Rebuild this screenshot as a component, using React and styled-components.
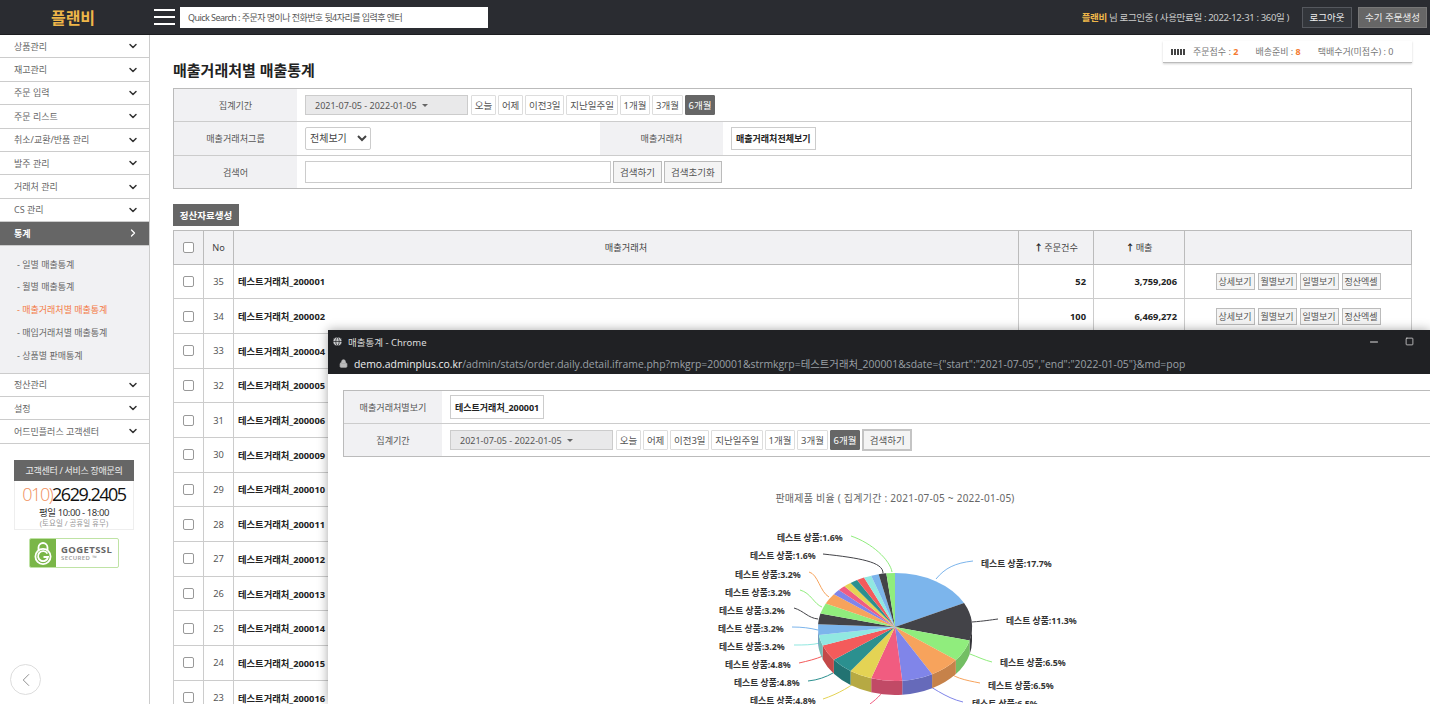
import React from 'react';
import styled, { createGlobalStyle } from 'styled-components';
import { ChevronDown, ChevronRight, ChevronLeft, Lock, Globe, Minus, Square } from 'lucide-react';

const FONT = '"Noto Sans", "Noto Sans CJK KR", sans-serif';

const GlobalStyle = createGlobalStyle`
  html, body {
    margin: 0;
    padding: 0;
    height: 100%;
    overflow: hidden;
    background: #fff;
  }
  body {
    font-family: ${FONT};
    font-size: 9.5px;
    color: #444;
  }
  * { box-sizing: border-box; }
`;

const menuTop = ['상품관리', '재고관리', '주문 입력', '주문 리스트', '취소/교환/반품 관리', '발주 관리', '거래처 관리', 'CS 관리'];
const menuSub = ['- 일별 매출통계', '- 월별 매출통계', '- 매출거래처별 매출통계', '- 매입거래처별 매출통계', '- 상품별 판매통계'];
const menuBottom = ['정산관리', '설정', '어드민플러스 고객센터'];
const rangeButtons = ['오늘', '어제', '이전3일', '지난일주일', '1개월', '3개월', '6개월'];
const rowActions = ['상세보기', '월별보기', '일별보기', '정산엑셀'];

const rows = [
  [35, '200001', '52', '3,759,206'],
  [34, '200002', '100', '6,469,272'],
  [33, '200004', '41', '2,918,400'],
  [32, '200005', '38', '2,640,150'],
  [31, '200006', '27', '1,987,300'],
  [30, '200009', '25', '1,702,880'],
  [29, '200010', '22', '1,530,600'],
  [28, '200011', '19', '1,244,900'],
  [27, '200012', '17', '1,102,350'],
  [26, '200013', '14', '968,200'],
  [25, '200014', '12', '804,700'],
  [24, '200015', '9', '615,400'],
  [23, '200016', '7', '482,100'],
];

const slices = [
  [17.7, '#7cb5ec'], [11.3, '#434348'], [6.5, '#90ed7d'], [6.5, '#f7a35c'], [6.5, '#8085e9'],
  [6.5, '#f15c80'], [4.8, '#e4d354'], [4.8, '#2b908f'], [4.8, '#f45b5b'], [3.2, '#91e8e1'],
  [3.2, '#7cb5ec'], [3.2, '#434348'], [3.2, '#90ed7d'], [3.2, '#f7a35c'], [1.6, '#8085e9'],
  [1.6, '#f15c80'], [1.6, '#e4d354'], [1.6, '#2b908f'], [1.6, '#f45b5b'], [1.6, '#91e8e1'],
  [1.6, '#7cb5ec'], [1.6, '#434348'], [1.8, '#90ed7d'],
];

const chartLabels = [
  [777, 537, '1.6'], [750, 555, '1.6'], [735, 574, '3.2'], [725, 592, '3.2'], [719, 610, '3.2'],
  [718, 628, '3.2'], [719, 646, '3.2'], [725, 664, '4.8'], [734, 682, '4.8'], [750, 700, '4.8'],
  [981, 563, '17.7'], [1006, 620, '11.3'], [1000, 662, '6.5'], [988, 685, '6.5'], [972, 703, '6.5'],
];

const connectors = [
  ['M936 579C945 568 955 563 973 561', '#7cb5ec'],
  ['M972 622C985 621 990 620 998 619', '#434348'],
  ['M970 654C978 657 984 660 992 662', '#90ed7d'],
  ['M945 668C952 678 965 680 980 683', '#f7a35c'],
  ['M918 680C930 685 945 698 963 702', '#8085e9'],
  ['M887 684C884 692 878 698 870 704', '#f15c80'],
  ['M862 677C852 686 838 694 823 699', '#e4d354'],
  ['M833 673C826 677 818 680 808 681', '#2b908f'],
  ['M823 656C816 659 808 661 799 663', '#f45b5b'],
  ['M820 643C812 645 804 645 794 645', '#91e8e1'],
  ['M818 630C810 628 802 627 792 627', '#7cb5ec'],
  ['M818 619C808 618 804 611 794 608', '#434348'],
  ['M822 607C814 604 811 593 800 590', '#90ed7d'],
  ['M829 597C820 592 818 574 809 572', '#f7a35c'],
  ['M883 573C883 562 860 558 823 554', '#434348'],
  ['M892 572C890 560 872 543 851 536', '#90ed7d'],
];

const CX = 895;
const CY = 627;
const RX = 77;
const RY = 54;
const DEPTH = 14;

const pt = (deg, dy = 0) => {
  const a = (deg * Math.PI) / 180;
  return [CX + RX * Math.sin(a), CY - RY * Math.cos(a) + dy];
};

const darken = (hex) => {
  const n = parseInt(hex.slice(1), 16);
  const c = [n >> 16, (n >> 8) & 255, n & 255].map((v) => Math.round(v * 0.8));
  return `rgb(${c.join(',')})`;
};

function PieChart() {
  let angle = 0;
  const parts = slices.map(([pct, color]) => {
    const from = angle;
    const to = angle + pct * 3.6;
    angle = to;
    return { from, to, color };
  });
  const walls = parts
    .map((p) => ({ ...p, from: Math.max(p.from, 90), to: Math.min(p.to, 270) }))
    .filter((p) => p.to > p.from);

  return (
    <ChartSvg viewBox="328 480 1102 224">
      <ChartTitle x="895" y="502" textAnchor="middle">판매제품 비율 ( 집계기간 : 2021-07-05 ~ 2022-01-05)</ChartTitle>
      {connectors.map(([d, color]) => (
        <path key={d} d={d} fill="none" stroke={color} strokeWidth="1" />
      ))}
      {walls.map((w) => {
        const [x0, y0] = pt(w.from);
        const [x1, y1] = pt(w.to);
        return (
          <path
            key={w.from}
            fill={darken(w.color)}
            d={`M${x0} ${y0}A${RX} ${RY} 0 0 1 ${x1} ${y1}L${x1} ${y1 + DEPTH}A${RX} ${RY} 0 0 0 ${x0} ${y0 + DEPTH}Z`}
          />
        );
      })}
      {parts.map((p) => {
        const [x0, y0] = pt(p.from);
        const [x1, y1] = pt(p.to);
        return (
          <path
            key={p.from}
            fill={p.color}
            d={`M${CX} ${CY}L${x0} ${y0}A${RX} ${RY} 0 0 1 ${x1} ${y1}Z`}
          />
        );
      })}
      {chartLabels.map(([x, y, pct]) => (
        <ChartLabel key={`${x}-${y}`} x={x} y={y + 3.5}>테스트 상품:{pct}%</ChartLabel>
      ))}
    </ChartSvg>
  );
}

function RangeButtons() {
  return rangeButtons.map((label) => (
    <SmallButton key={label} $active={label === '6개월'}>{label}</SmallButton>
  ));
}

function MenuRow({ label }) {
  return (
    <MenuItem>
      {label}
      <ChevronDown size={12} strokeWidth={3} color="#333" />
    </MenuItem>
  );
}

export default function App() {
  return (
    <Shell>
      <GlobalStyle />
      <TopBar>
        <Logo>플랜비</Logo>
        <Burger><i /><i /><i /></Burger>
        <QuickSearch>Quick Search : 주문자 명이나 전화번호 뒷4자리를 입력후 엔터</QuickSearch>
        <UserInfo><b>플랜비</b> 님 로그인중 ( 사용만료일 : 2022-12-31 : 360일 )</UserInfo>
        <TopButton>로그아웃</TopButton>
        <TopButton $primary>수기 주문생성</TopButton>
      </TopBar>

      <Body>
        <Sidebar>
          {menuTop.map((m) => <MenuRow key={m} label={m} />)}
          <MenuItem $active>
            통계
            <ChevronRight size={12} strokeWidth={2.5} color="#fff" />
          </MenuItem>
          <SubMenu>
            {menuSub.map((m, i) => <SubItem key={m} $current={i === 2}>{m}</SubItem>)}
          </SubMenu>
          {menuBottom.map((m) => <MenuRow key={m} label={m} />)}

          <Support>
            <SupportHead>고객센터 / 서비스 장애문의</SupportHead>
            <SupportBody>
              <Phone><em>010)</em>2629.2405</Phone>
              <Hours>평일 10:00 - 18:00</Hours>
              <Holiday>(토요일 / 공휴일 휴무)</Holiday>
            </SupportBody>
          </Support>

          <SslBadge>
            <SslMark>
              <svg width="18" height="24" viewBox="0 0 18 24" fill="none" stroke="#fff" strokeWidth="1.8">
                <path d="M4.5 9V6.5a4.5 4.5 0 0 1 9 0V9" />
                <circle cx="9" cy="15.5" r="7.6" />
                <path d="M13.4 12.6A5 5 0 1 0 14 16H9.5" />
              </svg>
            </SslMark>
            <SslText>
              <strong>GOGETSSL</strong>
              <span>SECURED ™</span>
            </SslText>
          </SslBadge>

          <BackButton><ChevronLeft size={22} strokeWidth={1} color="#888" /></BackButton>
        </Sidebar>

        <Main>
          <StatusBox>
            <Bars><i /><i /><i /><i /><i /></Bars>
            <StatusItem>주문접수 : <b>2</b></StatusItem>
            <StatusItem>배송준비 : <b>8</b></StatusItem>
            <StatusItem>택배수거(미접수) : 0</StatusItem>
          </StatusBox>
          <PageTitle>매출거래처별 매출통계</PageTitle>

          <FilterBox>
            <FilterRow>
              <FilterLabel $w={123}>집계기간</FilterLabel>
              <FilterCell>
                <DateRange>2021-07-05 - 2022-01-05 <Caret /></DateRange>
                <RangeButtons />
              </FilterCell>
            </FilterRow>
            <FilterRow>
              <FilterLabel $w={123}>매출거래처그룹</FilterLabel>
              <FilterCell $w={303}>
                <Select defaultValue="all"><option value="all">전체보기</option></Select>
              </FilterCell>
              <FilterLabel $w={123}>매출거래처</FilterLabel>
              <FilterCell>
                <ValueBox>매출거래처전체보기</ValueBox>
              </FilterCell>
            </FilterRow>
            <FilterRow>
              <FilterLabel $w={123}>검색어</FilterLabel>
              <FilterCell>
                <TextInput />
                <GrayButton>검색하기</GrayButton>
                <GrayButton>검색초기화</GrayButton>
              </FilterCell>
            </FilterRow>
          </FilterBox>

          <ExportButton>정산자료생성</ExportButton>

          <DataTable>
            <colgroup>
              <col width="30" /><col width="30" /><col /><col width="75" /><col width="91" /><col width="227" />
            </colgroup>
            <thead>
              <tr>
                <Th><Check /></Th>
                <Th>No</Th>
                <Th>매출거래처</Th>
                <Th><Arrow>↑</Arrow>주문건수</Th>
                <Th><Arrow>↑</Arrow>매출</Th>
                <Th />
              </tr>
            </thead>
            <tbody>
              {rows.map(([no, code, count, sales]) => (
                <tr key={no}>
                  <Td $align="center"><Check /></Td>
                  <Td $align="center">{no}</Td>
                  <Td $strong>테스트거래처_{code}</Td>
                  <Td $strong $align="right">{count}</Td>
                  <Td $strong $align="right">{sales}</Td>
                  <Td $align="center">
                    <ActionGroup>
                      {rowActions.map((a) => <ActionButton key={a}>{a}</ActionButton>)}
                    </ActionGroup>
                  </Td>
                </tr>
              ))}
            </tbody>
          </DataTable>
        </Main>
      </Body>

      <PopupWindow>
        <PopupTitle>
          <Globe size={11} color="#202124" fill="#c9cacc" strokeWidth={1.5} />
          <span>매출통계 - Chrome</span>
          <WindowControls>
            <Minus size={12} color="#ddd" />
            <Square size={9} color="#ddd" strokeWidth={2} />
          </WindowControls>
        </PopupTitle>
        <PopupUrl>
          <Lock size={9} color="#bbb" fill="#bbb" />
          <UrlText>
            <b>demo.adminplus.co.kr</b>/admin/stats/order.daily.detail.iframe.php?mkgrp=200001&amp;strmkgrp=테스트거래처_200001&amp;sdate={'{'}"start":"2021-07-05","end":"2022-01-05"{'}'}&amp;md=pop
          </UrlText>
        </PopupUrl>
        <PopupBody>
          <PopupFilter>
            <FilterRow>
              <FilterLabel $w={98}>매출거래처별보기</FilterLabel>
              <FilterCell>
                <ValueBox $tall>테스트거래처_200001</ValueBox>
              </FilterCell>
            </FilterRow>
            <FilterRow>
              <FilterLabel $w={98}>집계기간</FilterLabel>
              <FilterCell>
                <DateRange>2021-07-05 - 2022-01-05 <Caret /></DateRange>
                <RangeButtons />
                <SearchButton>검색하기</SearchButton>
              </FilterCell>
            </FilterRow>
          </PopupFilter>
        </PopupBody>
        <PieChart />
      </PopupWindow>
    </Shell>
  );
}

const Shell = styled.div`
  position: relative;
  width: 100%;
  height: 100vh;
  overflow: hidden;
`;

const TopBar = styled.header`
  display: flex;
  align-items: center;
  height: 35px;
  background: #2a2c31;
  border-bottom: 1px solid #1c1d20;
  padding-right: 3px;
`;

const Logo = styled.div`
  width: 150px;
  padding-right: 4px;
  text-align: center;
  font-size: 16px;
  font-weight: 700;
  color: #eeb649;
`;

const Burger = styled.div`
  display: flex;
  flex-direction: column;
  gap: 5px;
  width: 21px;
  margin: 0 5px 0 4px;
  i {
    display: block;
    height: 2px;
    background: #fff;
  }
`;

const QuickSearch = styled.div`
  width: 308px;
  height: 21px;
  line-height: 21px;
  padding-left: 8px;
  background: #fff;
  color: #555;
  font-size: 9px;
  letter-spacing: -0.55px;
  white-space: nowrap;
`;

const UserInfo = styled.div`
  margin-left: auto;
  margin-right: 13px;
  color: #ccc;
  font-size: 9.5px;
  letter-spacing: -0.35px;
  b { color: #eeb649; }
`;

const TopButton = styled.button`
  height: 21px;
  margin-left: ${(p) => (p.$primary ? '6px' : '0')};
  width: ${(p) => (p.$primary ? '69px' : '50px')};
  padding: 0;
  border: 1px solid ${(p) => (p.$primary ? '#777' : '#55585e')};
  background: ${(p) => (p.$primary ? '#666' : '#33363b')};
  color: #eee;
  font-family: ${FONT};
  font-size: 9.5px;
`;

const Body = styled.div`
  display: flex;
  height: 669px;
`;

const Sidebar = styled.aside`
  position: relative;
  flex: 0 0 150px;
  border-right: 1px solid #ccc;
  background: #fff;
`;

const MenuItem = styled.div`
  display: flex;
  align-items: center;
  justify-content: space-between;
  height: 23.4px;
  padding: 0 10px 0 14px;
  border-bottom: 1px solid #ccc;
  background: ${(p) => (p.$active ? '#666' : '#fff')};
  color: ${(p) => (p.$active ? '#fff' : '#666')};
  font-size: 9px;
  font-weight: ${(p) => (p.$active ? 700 : 400)};
`;

const SubMenu = styled.div`
  height: 128px;
  padding: 8px 0 0 17px;
  background: #f1f1f3;
  border-bottom: 1px solid #ccc;
`;

const SubItem = styled.div`
  height: 22.75px;
  line-height: 22.75px;
  font-size: 9px;
  color: ${(p) => (p.$current ? '#f47a45' : '#666')};
`;

const Support = styled.div`
  width: 120px;
  margin: 16px 0 0 14px;
`;

const SupportHead = styled.div`
  height: 21px;
  line-height: 21px;
  text-align: center;
  background: #666;
  color: #eee;
  font-size: 9px;
  letter-spacing: -0.3px;
`;

const SupportBody = styled.div`
  height: 49px;
  border: 1px solid #eee;
  border-top: 0;
  text-align: center;
`;

const Phone = styled.div`
  height: 26px;
  line-height: 26px;
  font-family: "Open Sans", sans-serif;
  font-size: 18px;
  font-weight: 400;
  letter-spacing: -1.5px;
  color: #111;
  em {
    font-style: normal;
    font-weight: 300;
    color: #f09060;
  }
`;

const Hours = styled.div`
  font-size: 9.5px;
  line-height: 11px;
  letter-spacing: -0.4px;
  color: #333;
`;

const Holiday = styled.div`
  font-size: 7.5px;
  line-height: 10px;
  color: #999;
`;

const SslBadge = styled.div`
  display: flex;
  width: 90px;
  height: 30px;
  margin: 8px 0 0 29px;
  border: 1px solid #bfe3a5;
  border-radius: 2px;
  overflow: hidden;
`;

const SslMark = styled.div`
  display: flex;
  align-items: center;
  justify-content: center;
  width: 26px;
  background: #7ab648;
`;

const SslText = styled.div`
  display: flex;
  flex-direction: column;
  justify-content: center;
  padding-left: 5px;
  font-family: "Open Sans", sans-serif;
  strong {
    font-size: 9.5px;
    line-height: 11px;
    letter-spacing: 0.4px;
    color: #666;
  }
  span {
    font-size: 6px;
    line-height: 7px;
    font-weight: 600;
    letter-spacing: 0.4px;
    color: #999;
  }
`;

const BackButton = styled.div`
  position: absolute;
  left: 10px;
  bottom: 9px;
  display: flex;
  align-items: center;
  justify-content: center;
  width: 31px;
  height: 31px;
  border: 1px solid #ddd;
  border-radius: 50%;
  background: #fff;
`;

const Main = styled.main`
  flex: 1;
  display: flex;
  flex-direction: column;
  min-width: 0;
  padding: 6px 18px 0 23px;
  & > * { flex-shrink: 0; }
`;

const StatusBox = styled.div`
  align-self: flex-end;
  display: flex;
  align-items: center;
  width: 249px;
  height: 22px;
  padding-left: 8px;
  background: #fff;
  border-bottom: 1px solid #bbb;
  box-shadow: 0 1px 2px rgba(0, 0, 0, 0.18);
  color: #777;
`;

const Bars = styled.div`
  display: flex;
  gap: 1px;
  margin-right: 8px;
  i {
    display: block;
    width: 2px;
    height: 6px;
    background: #444;
  }
`;

const StatusItem = styled.span`
  margin-right: 17px;
  white-space: nowrap;
  font-size: 9px;
  b { color: #f47a30; }
`;

const PageTitle = styled.h1`
  margin: 0;
  height: 25px;
  line-height: 15px;
  font-size: 15px;
  font-weight: 700;
  color: #222;
`;

const FilterBox = styled.div`
  display: flex;
  flex-direction: column;
  height: 101px;
  border: 1px solid #bbb;
`;

const FilterRow = styled.div`
  flex: 1;
  display: flex;
  min-height: 0;
  & + & { border-top: 1px solid #ccc; }
`;

const FilterLabel = styled.div`
  flex: 0 0 ${(p) => p.$w}px;
  display: flex;
  align-items: center;
  justify-content: center;
  background: #f1f1f3;
  color: #555;
  font-size: 9.1px;
`;

const FilterCell = styled.div`
  display: flex;
  align-items: center;
  gap: 2px;
  flex: ${(p) => (p.$w ? `0 0 ${p.$w}px` : 1)};
  padding-left: 8px;
  min-width: 0;
`;

const DateRange = styled.div`
  display: flex;
  align-items: center;
  gap: 5px;
  width: 163px;
  height: 20px;
  margin-right: 1px;
  padding-left: 9px;
  background: #e9e9ea;
  border: 1px solid #ccc;
  color: #555;
  font-size: 9px;
  white-space: nowrap;
`;

const Caret = styled.i`
  width: 0;
  height: 0;
  border: 3px solid transparent;
  border-top-color: #666;
  border-bottom: 0;
`;

const SmallButton = styled.button`
  height: 20px;
  padding: 0 2.8px;
  border: 1px solid ${(p) => (p.$active ? '#666' : '#ddd')};
  border-radius: 1px;
  background: ${(p) => (p.$active ? '#666' : '#fff')};
  color: ${(p) => (p.$active ? '#fff' : '#555')};
  font-family: ${FONT};
  font-size: 9.5px;
  white-space: nowrap;
`;

const Select = styled.select`
  width: 66px;
  height: 23px;
  padding: 0;
  border: 1px solid #ccc;
  border-radius: 2px;
  background: #fff;
  color: #444;
  font-family: ${FONT};
  font-size: 10px;
`;

const ValueBox = styled.div`
  display: flex;
  align-items: center;
  height: ${(p) => (p.$tall ? 24 : 23)}px;
  padding: 0 4px;
  background: #fff;
  border: 1px solid #ccc;
  color: #222;
  font-size: 9px;
  font-weight: 700;
  white-space: nowrap;
`;

const TextInput = styled.input`
  width: 306px;
  height: 22px;
  border: 1px solid #ccc;
  background: #fff;
`;

const GrayButton = styled.button`
  height: 22px;
  padding: 0 6px;
  border: 1px solid #bbb;
  background: #f4f4f4;
  color: #555;
  font-family: ${FONT};
  font-size: 9.5px;
  white-space: nowrap;
`;

const ExportButton = styled.button`
  align-self: flex-start;
  width: 66px;
  height: 22px;
  margin: 15px 0 4px;
  padding: 0;
  border: 0;
  background: #666;
  color: #fff;
  font-family: ${FONT};
  font-size: 9.5px;
  font-weight: 700;
`;

const DataTable = styled.table`
  width: 1239px;
  table-layout: fixed;
  border-collapse: collapse;
`;

const Th = styled.th`
  height: 33.5px;
  padding: 0;
  border: 1px solid #bbb;
  background: #f1f1f3;
  color: #444;
  font-size: 9.2px;
  font-weight: 400;
`;

const Arrow = styled.span`
  margin-right: 1px;
  font-weight: 700;
  color: #222;
`;

const Td = styled.td`
  height: 34.7px;
  padding: 0 ${(p) => (p.$align === 'right' ? 7 : 4)}px;
  border: 1px solid #ccc;
  text-align: ${(p) => p.$align || 'left'};
  color: ${(p) => (p.$strong ? '#222' : '#555')};
  font-weight: ${(p) => (p.$strong ? 700 : 400)};
  font-size: 9.3px;
`;

const Check = styled.input.attrs({ type: 'checkbox' })`
  appearance: none;
  display: block;
  width: 11px;
  height: 11px;
  margin: 0 auto;
  border: 1px solid #999;
  border-radius: 2px;
  background: #fff;
`;

const ActionGroup = styled.div`
  display: flex;
  justify-content: center;
  gap: 3px;
`;

const ActionButton = styled.button`
  width: 39px;
  height: 17px;
  padding: 0;
  border: 1px solid #bbb;
  background: #f4f4f4;
  color: #555;
  font-family: ${FONT};
  font-size: 9px;
  white-space: nowrap;
`;

const PopupWindow = styled.section`
  position: absolute;
  left: 328px;
  top: 330px;
  right: 0;
  bottom: 0;
  overflow: hidden;
  background: #fff;
  box-shadow: 0 0 10px rgba(0, 0, 0, 0.35);
`;

const PopupTitle = styled.div`
  display: flex;
  align-items: center;
  gap: 5px;
  height: 23px;
  padding-left: 4px;
  background: #202124;
  color: #dcdcdc;
  font-size: 9.5px;
`;

const WindowControls = styled.div`
  display: flex;
  align-items: center;
  gap: 25px;
  margin-left: auto;
  margin-right: 16px;
`;

const PopupUrl = styled.div`
  display: flex;
  align-items: center;
  gap: 6px;
  height: 21px;
  padding-left: 11px;
  background: #202124;
`;

const UrlText = styled.div`
  color: #9aa0a6;
  font-family: "Open Sans", "Noto Sans CJK KR", sans-serif;
  font-size: 10.4px;
  white-space: nowrap;
  b {
    color: #eee;
    font-weight: 400;
  }
`;

const PopupBody = styled.div`
  padding: 16px 0 0 15px;
`;

const PopupFilter = styled.div`
  display: flex;
  flex-direction: column;
  width: 1200px;
  height: 67px;
  border: 1px solid #bbb;
`;

const SearchButton = styled(GrayButton)`
  width: 50px;
  padding: 0;
  border-width: 2px;
  border-color: #c4c4c4;
`;

const ChartSvg = styled.svg`
  display: block;
  width: 1102px;
  height: 224px;
  margin-top: 23px;
`;

const ChartTitle = styled.text`
  font-family: ${FONT};
  font-size: 10px;
  letter-spacing: 0.25px;
  fill: #666;
`;

const ChartLabel = styled.text`
  font-family: ${FONT};
  font-size: 8.8px;
  font-weight: 700;
  fill: #333;
`;
